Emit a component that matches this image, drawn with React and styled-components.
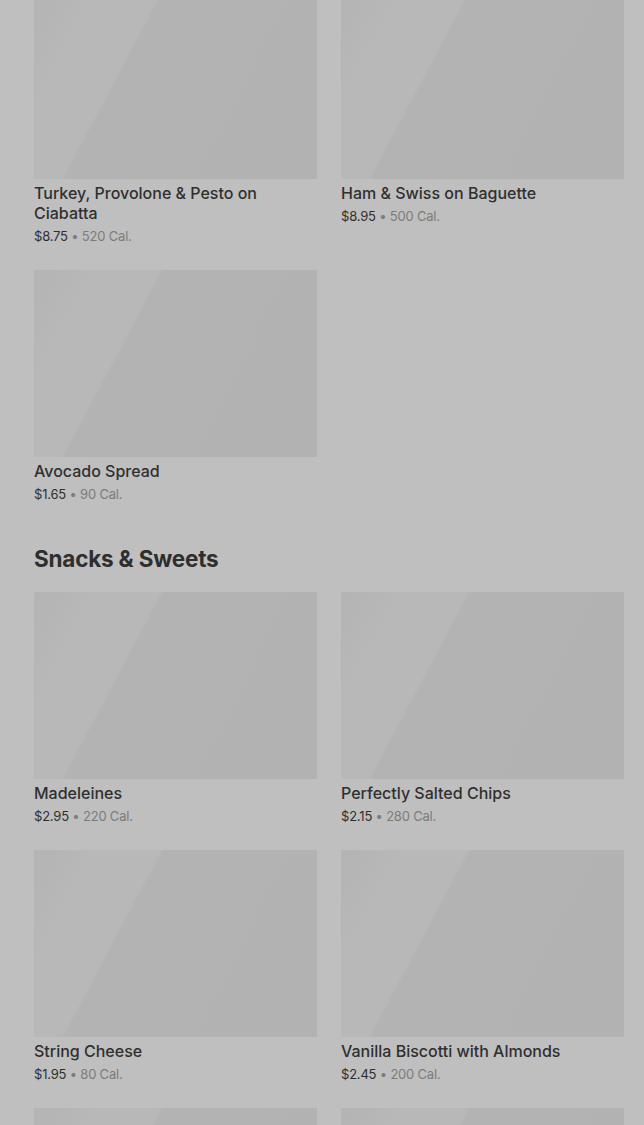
import React from "react";
import styled, { createGlobalStyle } from "styled-components";

const Global = createGlobalStyle`
  html, body { margin: 0; padding: 0; background: #bfbfbf; overflow: hidden; }
  body { font-family: Inter, "Noto Sans", sans-serif; -webkit-font-smoothing: antialiased; }
`;

const Page = styled.div`
  padding: 0 20px 0 34px;
  margin-top: -8px;
`;

const Section = styled.section`
  display: flex;
  flex-direction: column;
`;

const Heading = styled.h2`
  margin: 39px 0 17px;
  font-size: 22.5px;
  line-height: 32px;
  font-weight: 700;
  color: #2e2e2e;
  letter-spacing: -0.2px;
`;

const Grid = styled.div`
  display: grid;
  grid-template-columns: 1fr 1fr;
  column-gap: 24px;
  row-gap: 24px;
`;

const Card = styled.div`
  display: flex;
  flex-direction: column;
  min-width: 0;
`;

const Thumb = styled.div`
  height: 187px;
  background: linear-gradient(
    118deg,
    #b4b4b4 0%,
    #b5b5b5 6%,
    #b8b8b8 16%,
    #b8b8b8 33%,
    #b3b3b3 34%,
    #b2b2b2 100%
  );
`;

const Title = styled.div`
  margin-top: 4px;
  font-size: 16px;
  line-height: 20px;
  font-weight: 500;
  color: #2f2f2f;
`;

const Meta = styled.div`
  margin-top: 3px;
  font-size: 13px;
  line-height: 20px;
  color: #2f2f2f;
  letter-spacing: -0.2px;
`;

const Cal = styled.span`
  color: #7c7c7c;
`;

const Item = ({ name, price, cal }) => (
  <Card>
    <Thumb />
    {name && <Title>{name}</Title>}
    {price && (
      <Meta>
        {price} <Cal>• {cal} Cal.</Cal>
      </Meta>
    )}
  </Card>
);

const sandwiches = [
  { name: "Turkey, Provolone & Pesto on Ciabatta", price: "$8.75", cal: 520 },
  { name: "Ham & Swiss on Baguette", price: "$8.95", cal: 500 },
  { name: "Avocado Spread", price: "$1.65", cal: 90 },
];

const snacks = [
  { id: 1, name: "Madeleines", price: "$2.95", cal: 220 },
  { id: 2, name: "Perfectly Salted Chips", price: "$2.15", cal: 280 },
  { id: 3, name: "String Cheese", price: "$1.95", cal: 80 },
  { id: 4, name: "Vanilla Biscotti with Almonds", price: "$2.45", cal: 200 },
  { id: 5 },
  { id: 6 },
];

export default function App() {
  return (
    <>
      <Global />
      <Page>
        <Section>
          <Grid>
            {sandwiches.map((it) => (
              <Item key={it.name} {...it} />
            ))}
          </Grid>
        </Section>
        <Section>
          <Heading>Snacks &amp; Sweets</Heading>
          <Grid>
            {snacks.map((it) => (
              <Item key={it.id} {...it} />
            ))}
          </Grid>
        </Section>
      </Page>
    </>
  );
}
